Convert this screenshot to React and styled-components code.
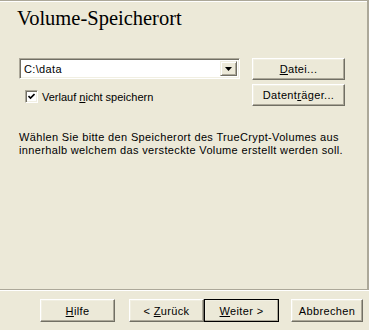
import React from "react";
import styled, { createGlobalStyle } from "styled-components";

const GlobalStyle = createGlobalStyle`
  html, body {
    margin: 0;
    padding: 0;
    background: #ece9d8;
  }
  body {
    font-family: "Liberation Sans", Arial, sans-serif;
    font-size: 11px;
    letter-spacing: 0.35px;
    color: #000;
  }
`;

const Wizard = styled.div`
  width: 369px;
  height: 330px;
  display: flex;
  flex-direction: column;
  background: #ece9d8;
  overflow: hidden;
`;

const Page = styled.div`
  height: 289px;
  box-sizing: border-box;
  border-top: 1px solid #aca899;
  border-right: 2px solid #aca899;
  box-shadow: inset 0 1px 0 #ffffff;
  padding: 0 0 0 17px;
`;

const Title = styled.h1`
  margin: 5px 0 0 0;
  font-family: "Liberation Serif", "Times New Roman", serif;
  font-weight: normal;
  font-size: 20.5px;
  line-height: 24px;
  letter-spacing: 0;
`;

const LocationGrid = styled.div`
  margin-top: 28px;
  display: grid;
  grid-template-columns: 221px 93px;
  column-gap: 12px;
  padding-left: 2px;
`;

const LeftColumn = styled.div`
  display: flex;
  flex-direction: column;
`;

const RightColumn = styled.div`
  display: flex;
  flex-direction: column;
  gap: 4px;
`;

const Combo = styled.div`
  height: 21px;
  box-sizing: border-box;
  display: flex;
  align-items: stretch;
  background: #fff;
  border-top: 1px solid #aca899;
  border-left: 1px solid #aca899;
  border-right: 1px solid #fff;
  border-bottom: 1px solid #fff;
  box-shadow: inset 1px 1px 0 #716f64, inset -1px -1px 0 #f1efe2;
  padding: 2px;
`;

const ComboText = styled.div`
  flex: 1;
  padding-left: 2px;
  display: flex;
  align-items: center;
  font-size: 11px;
`;

const ComboArrow = styled.div`
  width: 15px;
  display: flex;
  align-items: center;
  justify-content: center;
  background: #ece9d8;
  border-top: 1px solid #f1efe2;
  border-left: 1px solid #f1efe2;
  border-right: 1px solid #716f64;
  border-bottom: 1px solid #716f64;
  box-shadow: inset 1px 1px 0 #fff, inset -1px -1px 0 #aca899;
`;

const CheckRow = styled.label`
  display: flex;
  align-items: center;
  margin-top: 11px;
  margin-left: 6px;
  gap: 4px;
  height: 13px;
  letter-spacing: 0;
`;

const CheckBox = styled.span`
  width: 13px;
  height: 13px;
  box-sizing: border-box;
  background: #fff;
  border-top: 1px solid #aca899;
  border-left: 1px solid #aca899;
  border-right: 1px solid #fff;
  border-bottom: 1px solid #fff;
  box-shadow: inset 1px 1px 0 #716f64, inset -1px -1px 0 #f1efe2;
  display: flex;
  align-items: center;
  justify-content: center;
`;

const Button = styled.button`
  width: ${(p) => p.$w || 75}px;
  height: ${(p) => p.$h || 23}px;
  margin: 0;
  padding: 0;
  font-family: "Liberation Sans", Arial, sans-serif;
  font-size: 11px;
  letter-spacing: 0.35px;
  color: #000;
  background: #ece9d8;
  box-sizing: border-box;
  border-top: 1px solid #fff;
  border-left: 1px solid #fff;
  border-right: 1px solid #716f64;
  border-bottom: 1px solid #716f64;
  box-shadow: inset -1px -1px 0 #aca899, inset 1px 1px 0 #f1efe2;
  outline: ${(p) => (p.$default ? "1px solid #000" : "none")};
  outline-offset: -1px;
  cursor: default;
  u {
    text-decoration: underline;
    text-underline-offset: 1px;
  }
`;

const Description = styled.p`
  margin: 25px 0 0 2px;
  line-height: 13px;
  font-size: 11px;
`;

const Separator = styled.div`
  height: 1px;
  background: #aca899;
  border-bottom: 1px solid #fff;
`;

const Footer = styled.div`
  display: flex;
  align-items: center;
  padding: 8px 0 0 40px;
`;

const NavPair = styled.div`
  display: flex;
  margin-left: 14px;
  margin-right: 12px;
`;

export default function App() {
  return (
    <>
      <GlobalStyle />
      <Wizard>
        <Page>
          <Title>Volume-Speicherort</Title>
          <LocationGrid>
            <LeftColumn>
              <Combo>
                <ComboText>C:\data</ComboText>
                <ComboArrow>
                  <svg width="7" height="4" viewBox="0 0 7 4">
                    <path d="M0 0h7L3.5 4z" fill="#000" />
                  </svg>
                </ComboArrow>
              </Combo>
              <CheckRow>
                <CheckBox>
                  <svg width="7" height="7" viewBox="0 0 7 7">
                    <path
                      d="M0.5 3 L2.5 5 L6.5 1"
                      stroke="#000"
                      strokeWidth="1.6"
                      fill="none"
                    />
                  </svg>
                </CheckBox>
                <span>
                  Verlauf <u>n</u>icht speichern
                </span>
              </CheckRow>
            </LeftColumn>
            <RightColumn>
              <Button $w={93} $h={22}>
                <u>D</u>atei...
              </Button>
              <Button $w={93} $h={22}>
                Datent<u>r</u>äger...
              </Button>
            </RightColumn>
          </LocationGrid>
          <Description>
            Wählen Sie bitte den Speicherort des TrueCrypt-Volumes aus
            <br />
            innerhalb welchem das versteckte Volume erstellt werden soll.
          </Description>
        </Page>
        <Separator />
        <Footer>
          <Button>
            <u>H</u>ilfe
          </Button>
          <NavPair>
            <Button>
              &lt; <u>Z</u>urück
            </Button>
            <Button $default>
              <u>W</u>eiter &gt;
            </Button>
          </NavPair>
          <Button $w={72}>Abbrechen</Button>
        </Footer>
      </Wizard>
    </>
  );
}
